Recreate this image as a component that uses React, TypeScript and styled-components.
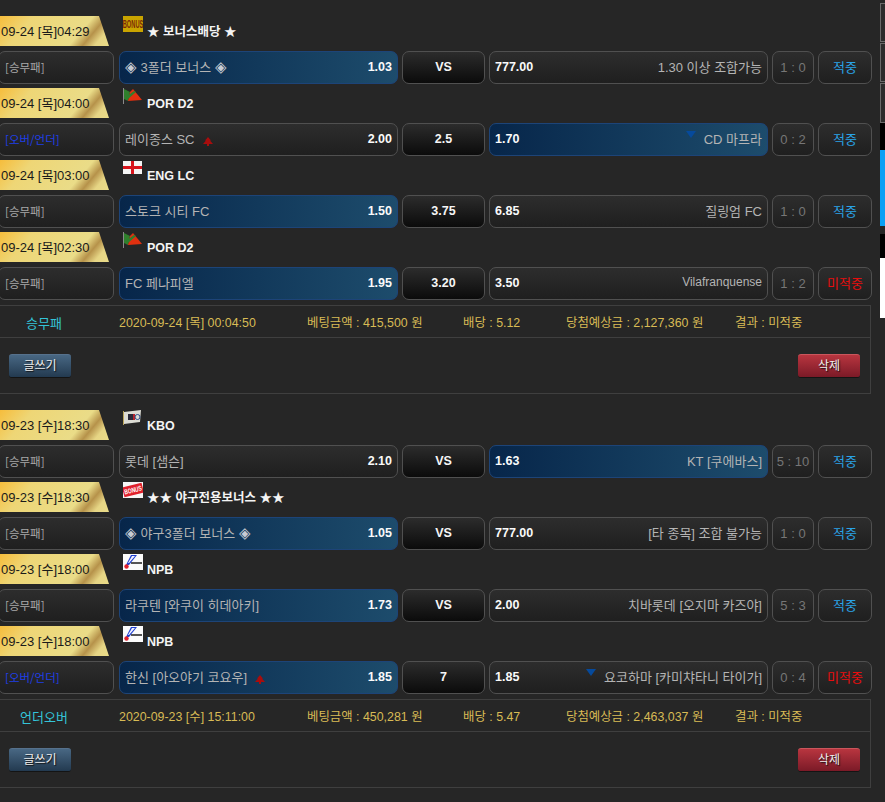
import React from "react";
import styled, { createGlobalStyle } from "styled-components";

type Mark = "up" | "down";
type Flag = "bonus" | "por" | "eng" | "kbo" | "baseball" | "npb";

interface Game {
  time: string;
  flag: Flag;
  league: string;
  type: string;
  over?: boolean;
  home: string;
  homeOdds: string;
  homePicked?: boolean;
  homeMark?: Mark;
  mid: string;
  awayOdds: string;
  away: string;
  awayPicked?: boolean;
  awayMark?: Mark;
  awayLatin?: boolean;
  score: string;
  hit: boolean;
}

interface Bet {
  games: Game[];
  kind: string;
  date: string;
  amount: string;
  rate: string;
  prize: string;
  result: string;
}

const bets: Bet[] = [
  {
    kind: "승무패",
    date: "2020-09-24 [목] 00:04:50",
    amount: "베팅금액 : 415,500 원",
    rate: "배당 : 5.12",
    prize: "당첨예상금 : 2,127,360 원",
    result: "결과 : 미적중",
    games: [
      { time: "09-24 [목]04:29", flag: "bonus", league: "★ 보너스배당 ★", type: "[승무패]", home: "◈ 3폴더 보너스 ◈", homeOdds: "1.03", homePicked: true, mid: "VS", awayOdds: "777.00", away: "1.30 이상 조합가능", score: "1 : 0", hit: true },
      { time: "09-24 [목]04:00", flag: "por", league: "POR D2", type: "[오버/언더]", over: true, home: "레이종스 SC", homeMark: "up", homeOdds: "2.00", mid: "2.5", awayOdds: "1.70", away: "CD 마프라", awayMark: "down", awayPicked: true, score: "0 : 2", hit: true },
      { time: "09-24 [목]03:00", flag: "eng", league: "ENG LC", type: "[승무패]", home: "스토크 시티 FC", homeOdds: "1.50", homePicked: true, mid: "3.75", awayOdds: "6.85", away: "질링엄 FC", score: "1 : 0", hit: true },
      { time: "09-24 [목]02:30", flag: "por", league: "POR D2", type: "[승무패]", home: "FC 페나피엘", homeOdds: "1.95", homePicked: true, mid: "3.20", awayOdds: "3.50", away: "Vilafranquense", awayLatin: true, score: "1 : 2", hit: false },
    ],
  },
  {
    kind: "언더오버",
    date: "2020-09-23 [수] 15:11:00",
    amount: "베팅금액 : 450,281 원",
    rate: "배당 : 5.47",
    prize: "당첨예상금 : 2,463,037 원",
    result: "결과 : 미적중",
    games: [
      { time: "09-23 [수]18:30", flag: "kbo", league: "KBO", type: "[승무패]", home: "롯데 [샘슨]", homeOdds: "2.10", mid: "VS", awayOdds: "1.63", away: "KT [쿠에바스]", awayPicked: true, score: "5 : 10", hit: true },
      { time: "09-23 [수]18:30", flag: "baseball", league: "★★ 야구전용보너스 ★★", type: "[승무패]", home: "◈ 야구3폴더 보너스 ◈", homeOdds: "1.05", homePicked: true, mid: "VS", awayOdds: "777.00", away: "[타 종목] 조합 불가능", score: "1 : 0", hit: true },
      { time: "09-23 [수]18:00", flag: "npb", league: "NPB", type: "[승무패]", home: "라쿠텐 [와쿠이 히데아키]", homeOdds: "1.73", homePicked: true, mid: "VS", awayOdds: "2.00", away: "치바롯데 [오지마 카즈야]", score: "5 : 3", hit: true },
      { time: "09-23 [수]18:00", flag: "npb", league: "NPB", type: "[오버/언더]", over: true, home: "한신 [아오야기 코요우]", homeMark: "up", homeOdds: "1.85", homePicked: true, mid: "7", awayOdds: "1.85", away: "요코하마 [카미챠타니 타이가]", awayMark: "down", score: "0 : 4", hit: false },
    ],
  },
];

const stripParts = [
  { h: 3, c: "#262626" },
  { h: 39, c: "#2c2c2c", framed: true },
  { h: 1, c: "#262626" },
  { h: 39, c: "#2c2c2c", framed: true },
  { h: 1, c: "#262626" },
  { h: 40, c: "#2c2c2c", framed: true },
  { h: 27, c: "#000000" },
  { h: 76, c: "#0aa0f5" },
  { h: 8, c: "#262626" },
  { h: 24, c: "#000000" },
  { h: 60, c: "#ffffff" },
];

const GlobalStyle = createGlobalStyle`
  html, body {
    margin: 0;
    height: 802px;
    overflow: hidden;
    background: #262626;
  }
  body {
    font-family: "Liberation Sans", "Noto Sans CJK KR", sans-serif;
    font-size: 13px;
  }
`;

const Page = styled.div`
  position: relative;
  width: 885px;
  height: 802px;
  overflow: hidden;
  background: #262626;
`;

const List = styled.div`
  display: flex;
  flex-direction: column;
  gap: 16px;
  width: 874px;
  margin-left: -2px;
  padding-top: 16px;
`;

const GameBlock = styled.div`
  display: flex;
  flex-direction: column;
  gap: 5px;
  margin-bottom: 4px;
`;

const LeagueRow = styled.div`
  display: flex;
  height: 30px;
  padding-left: 2px;
`;

const Banner = styled.div`
  width: 109px;
  height: 30px;
  line-height: 31px;
  padding-left: 1px;
  box-sizing: border-box;
  clip-path: polygon(0 0, 99px 0, 109px 100%, 0 100%);
  background: linear-gradient(130deg, #f6bd3c 0, #eed676 25%, #eadc88 70%, #b6924a 80%, #e6d585 89%, #eadc88 100%);
  color: #1a1a1a;
  white-space: nowrap;
`;

const FlagBox = styled.svg`
  flex: none;
  width: 20px;
  height: 16px;
  margin-left: 14px;
`;

const LeagueName = styled.span`
  margin-left: 4px;
  line-height: 33px;
  color: #f4f4f4;
  font-weight: 700;
  font-size: 12.5px;
  white-space: nowrap;
`;

const GameRow = styled.div`
  display: grid;
  grid-template-columns: 117px 279px 83px 279px 42px 54px;
  grid-template-rows: 33px;
  column-gap: 4px;
`;

const Cell = styled.div`
  display: flex;
  align-items: center;
  box-sizing: border-box;
  padding: 0 5px 1px;
  border: 1px solid #505050;
  border-radius: 7px;
  background: linear-gradient(180deg, #2d2d2d, #1f1f1f);
  white-space: nowrap;
  overflow: hidden;
`;

const TypeCell = styled(Cell)<{ $over?: boolean }>`
  padding-left: 6px;
  margin-right: 1px;
  color: ${(p) => (p.$over ? "#1f3fe6" : "#a8a8a8")};
  font-family: "Noto Sans CJK KR", "Liberation Sans", sans-serif;
  font-size: 11.5px;
`;

const TeamCell = styled(Cell)<{ $picked?: boolean }>`
  justify-content: space-between;
  gap: 6px;
  color: #b4b4b4;
  ${(p) =>
    p.$picked &&
    `
    border-color: #1d4478;
    background: linear-gradient(90deg, #07264a, #1d4c6c);
  `}
`;

const Side = styled.span<{ $latin?: boolean }>`
  display: flex;
  align-items: center;
  margin-bottom: 2px;
  white-space: pre;
  font-size: ${(p) => (p.$latin ? "12px" : "13px")};
`;

const Diamond = styled.span`
  color: #c8ccd4;
  font-size: 15px;
  line-height: 1;
`;

const Odds = styled.b`
  color: #fafafa;
  font-size: 12.5px;
`;

const MidCell = styled(Cell)`
  justify-content: center;
  background: linear-gradient(180deg, #2c2c2c, #0b0b0b);
  color: #f6f6f6;
  font-size: 12.5px;
  font-weight: 700;
`;

const ScoreCell = styled(Cell)`
  justify-content: center;
  padding: 0 0 1px;
  color: #767676;
`;

const StatusCell = styled(Cell)<{ $hit: boolean }>`
  justify-content: center;
  padding: 0 0 3px;
  color: ${(p) => (p.$hit ? "#2aa4e8" : "#e80d0d")};
`;

const UpMark = styled.svg`
  width: 10px;
  height: 9px;
  margin: 6px 0 0 8px;
`;

const DownMark = styled.svg`
  width: 10px;
  height: 7px;
  margin: 0 8px 8px 0;
`;

const Summary = styled.div`
  display: flex;
  flex-direction: column;
  width: 873px;
  height: 89px;
  box-sizing: border-box;
  margin-top: 5px;
  border: 1px solid #3f3f3f;
`;

const InfoRow = styled.div`
  display: grid;
  grid-template-columns: 120px 188px 156px 103px 169px 1fr;
  flex: none;
  height: 32px;
  padding-top: 1px;
  box-sizing: border-box;
  align-items: center;
  border-bottom: 1px solid #3f3f3f;
  color: #d8bb55;
  font-size: 12.4px;
  white-space: nowrap;
`;

const KindLabel = styled.span`
  padding-right: 30px;
  text-align: center;
  color: #34c4d8;
  font-size: 13px;
`;

const ButtonRow = styled.div`
  display: flex;
  flex: 1;
  align-items: center;
  justify-content: space-between;
  padding: 0 10px;
`;

const ActionButton = styled.button<{ $danger?: boolean }>`
  width: 62px;
  height: 24px;
  padding: 0 0 3px;
  border: 0;
  border-top: 1px solid ${(p) => (p.$danger ? "#c9565c" : "#56718c")};
  border-bottom: 1px solid #141414;
  border-radius: 3px;
  background: ${(p) =>
    p.$danger
      ? "linear-gradient(180deg, #b8353f, #7b1a27)"
      : "linear-gradient(180deg, #486783, #233a50)"};
  color: #eeeeee;
  font-family: "Noto Sans CJK KR", sans-serif;
  font-size: 12px;
  text-shadow: 1px 1px 1px #111;
`;

const SideStrip = styled.div`
  position: absolute;
  top: 0;
  right: 0;
  display: flex;
  flex-direction: column;
  width: 5px;
`;

const StripPart = styled.div<{ $h: number; $c: string; $framed?: boolean }>`
  height: ${(p) => p.$h}px;
  box-sizing: border-box;
  background: ${(p) => p.$c};
  ${(p) => p.$framed && "border: 1px solid #6a6a6a; border-right: 0;"}
`;

const FlagArt: React.FC<{ flag: Flag }> = ({ flag }) => {
  if (flag === "bonus") {
    return (
      <FlagBox viewBox="0 0 20 16">
        <rect width="20" height="16" fill="#c9a400" />
        <text transform="translate(10 12) scale(.52 1)" textAnchor="middle" fontSize="11" fontWeight="700" fontFamily="Liberation Sans, sans-serif" fill="#7a2a08">
          BONUS
        </text>
      </FlagBox>
    );
  }
  if (flag === "por") {
    return (
      <FlagBox viewBox="0 0 20 16">
        <rect x="0" y="0" width="1" height="16" fill="#8a8a8a" />
        <path d="M1 1 L7 4 L5 13 L1 11 Z" fill="#2f7f2c" />
        <path d="M7 4 L10 1 L19 12 L5 13 Z" fill="#e0300f" />
        <path d="M3 9 L11 3 L13 4 L5 11 Z" fill="#2f7f2c" />
      </FlagBox>
    );
  }
  if (flag === "eng") {
    return (
      <FlagBox viewBox="0 0 20 16">
        <rect y="1" width="19" height="13" fill="#f4f4f4" />
        <rect x="8" y="1" width="3" height="13" fill="#d8141c" />
        <rect y="6" width="19" height="3" fill="#d8141c" />
      </FlagBox>
    );
  }
  if (flag === "kbo") {
    return (
      <FlagBox viewBox="0 0 20 16">
        <rect x="0" y="1" width="1" height="14" fill="#b9a45a" />
        <path d="M1 2 L18 0 L17 12 L1 14 Z" fill="#dcdcd4" />
        <rect x="5" y="4" width="5" height="6" fill="#2a2a3a" />
        <rect x="10" y="4" width="2" height="6" fill="#b8232b" />
        <circle cx="14.5" cy="7" r="2.5" fill="none" stroke="#2b4a8a" strokeWidth="1" />
      </FlagBox>
    );
  }
  if (flag === "baseball") {
    return (
      <FlagBox viewBox="0 0 20 16">
        <rect width="20" height="16" fill="#f6f6f6" />
        <g transform="rotate(-14 10 8)">
          <rect x="0" y="3" width="20" height="10" fill="#e0202c" />
          <text transform="translate(10 10.5) scale(.7 1)" textAnchor="middle" fontSize="7" fontWeight="700" fontFamily="Liberation Sans, sans-serif" fill="#ffffff">
            BONUS
          </text>
        </g>
      </FlagBox>
    );
  }
  return (
    <FlagBox viewBox="0 0 20 16">
      <rect width="20" height="16" fill="#fbfbfb" />
      <path d="M8 1 L14 1 L6 11 L3 11 Z" fill="#1f3fd0" />
      <path d="M9 2 L12 2 L6 9 L5 9 Z" fill="#f4f4ff" />
      <circle cx="3.5" cy="12.5" r="2.2" fill="#e0202c" />
      <rect x="8" y="8" width="11" height="2" fill="#555" />
    </FlagBox>
  );
};

const Up = () => (
  <UpMark viewBox="0 0 10 9">
    <path d="M5 0 L8 3.5 H7 L10 7 H6 V9 H4 V7 H0 L3 3.5 H2 Z" fill="#a80d0d" />
  </UpMark>
);

const Down = () => (
  <DownMark viewBox="0 0 10 7">
    <path d="M0 0 H10 L5 7 Z" fill="#064a9c" />
  </DownMark>
);

// the ◈ sign is drawn larger than the name around it
const TeamName: React.FC<{ name: string }> = ({ name }) => (
  <span>
    {name.split(/(◈)/).map((part, i) =>
      part === "◈" ? <Diamond key={i}>{part}</Diamond> : part
    )}
  </span>
);

const GameItem: React.FC<{ game: Game }> = ({ game }) => (
  <GameBlock>
    <LeagueRow>
      <Banner>{game.time}</Banner>
      <FlagArt flag={game.flag} />
      <LeagueName>{game.league}</LeagueName>
    </LeagueRow>
    <GameRow>
      <TypeCell $over={game.over}>{game.type}</TypeCell>
      <TeamCell $picked={game.homePicked}>
        <Side>
          <TeamName name={game.home} />
          {game.homeMark === "up" && <Up />}
        </Side>
        <Odds>{game.homeOdds}</Odds>
      </TeamCell>
      <MidCell>{game.mid}</MidCell>
      <TeamCell $picked={game.awayPicked}>
        <Odds>{game.awayOdds}</Odds>
        <Side $latin={game.awayLatin}>
          {game.awayMark === "down" && <Down />}
          {game.away}
        </Side>
      </TeamCell>
      <ScoreCell>{game.score}</ScoreCell>
      <StatusCell $hit={game.hit}>{game.hit ? "적중" : "미적중"}</StatusCell>
    </GameRow>
  </GameBlock>
);

const BetCard: React.FC<{ bet: Bet }> = ({ bet }) => (
  <div>
    {bet.games.map((game, i) => (
      <GameItem key={i} game={game} />
    ))}
    <Summary>
      <InfoRow>
        <KindLabel>{bet.kind}</KindLabel>
        <span>{bet.date}</span>
        <span>{bet.amount}</span>
        <span>{bet.rate}</span>
        <span>{bet.prize}</span>
        <span>{bet.result}</span>
      </InfoRow>
      <ButtonRow>
        <ActionButton>글쓰기</ActionButton>
        <ActionButton $danger>삭제</ActionButton>
      </ButtonRow>
    </Summary>
  </div>
);

const App: React.FC = () => (
  <Page>
    <GlobalStyle />
    <List>
      {bets.map((bet, i) => (
        <BetCard key={i} bet={bet} />
      ))}
    </List>
    <SideStrip>
      {stripParts.map((part, i) => (
        <StripPart key={i} $h={part.h} $c={part.c} $framed={part.framed} />
      ))}
    </SideStrip>
  </Page>
);

export default App;
